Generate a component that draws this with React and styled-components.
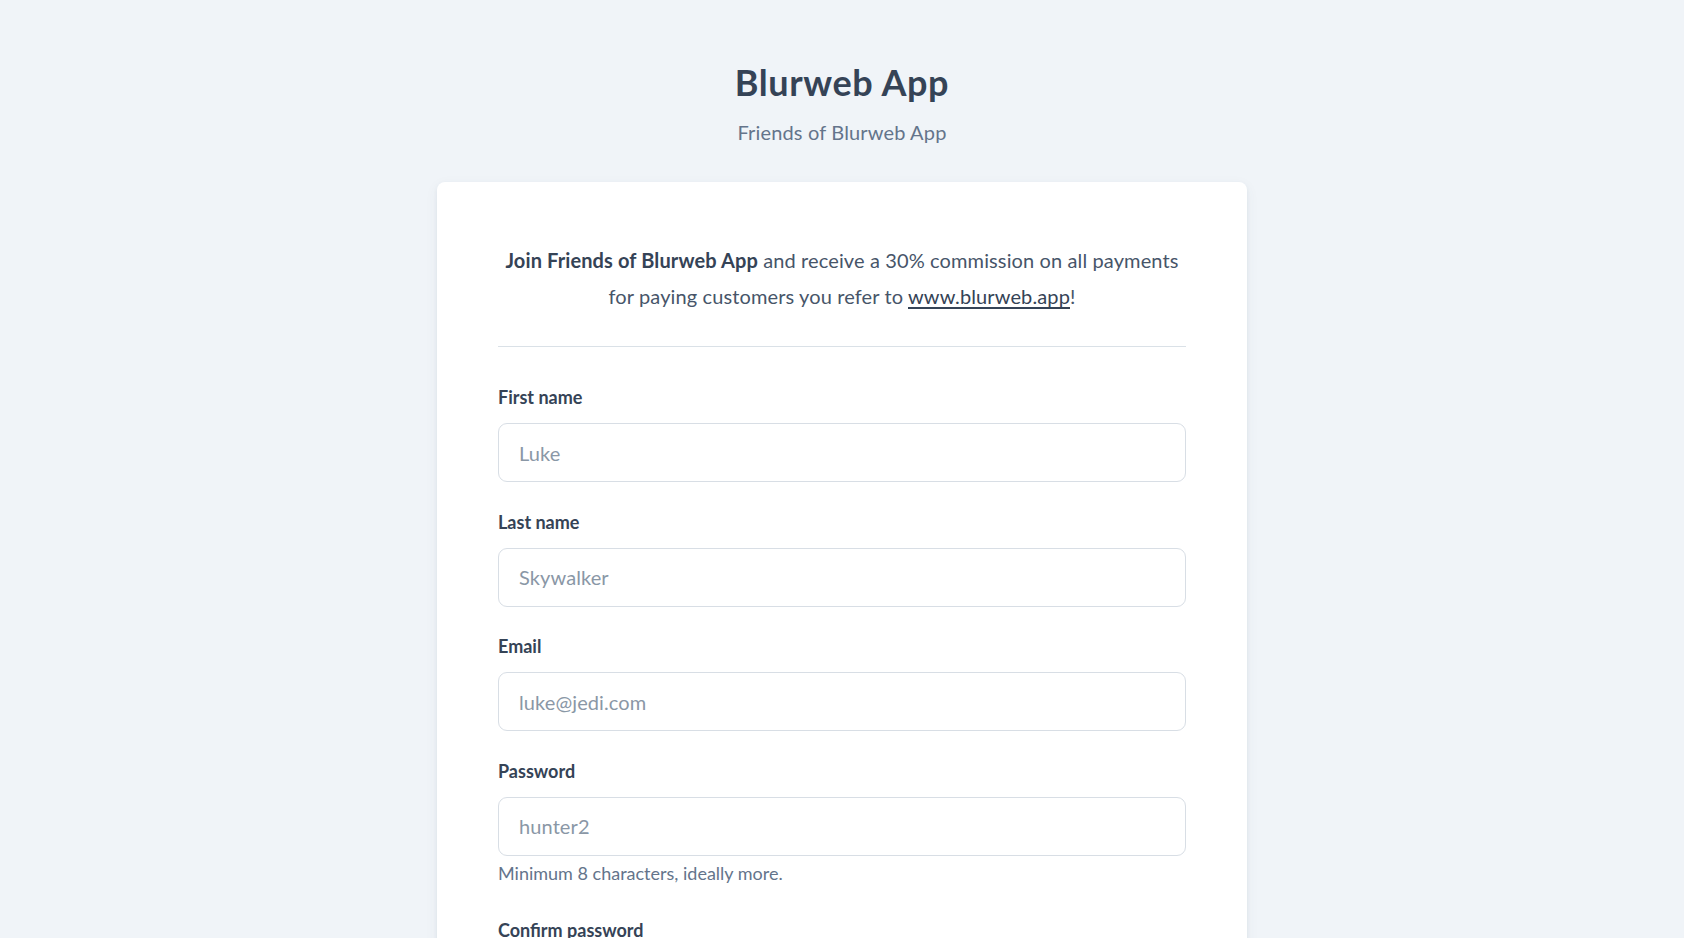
import React from "react";
import styled, { createGlobalStyle } from "styled-components";

const Global = createGlobalStyle`
  html, body { margin: 0; padding: 0; }
  body {
    background: #f0f4f8;
    font-family: Lato, "Open Sans", sans-serif;
    color: #354356;
    -webkit-font-smoothing: antialiased;
  }
  * { box-sizing: border-box; }
`;

const Page = styled.main`
  display: flex;
  flex-direction: column;
  align-items: center;
  padding: 61px 0 60px;
`;

const Title = styled.h1`
  margin: 0;
  font-size: 36px;
  line-height: 43px;
  font-weight: 700;
  letter-spacing: 0.6px;
  color: #354356;
`;

const Subtitle = styled.p`
  margin: 13px 0 35px;
  font-size: 20px;
  line-height: 30px;
  letter-spacing: 0.15px;
  color: #64748b;
`;

const Card = styled.section`
  width: 810px;
  background: #fff;
  border-radius: 8px;
  box-shadow: 0 2px 4px 0 rgba(60, 80, 110, 0.07), 0 4px 14px 0 rgba(60, 80, 110, 0.06);
  padding: 60px 61px;
`;

const Intro = styled.p`
  margin: 0 0 32px;
  text-align: center;
  font-size: 20px;
  line-height: 36px;
  letter-spacing: 0.12px;
  color: #475569;
  strong { color: #354356; font-weight: 700; }
  a { color: #354356; text-decoration: underline; text-underline-offset: 3px; }
`;

const Divider = styled.hr`
  margin: 0 0 37px;
  border: 0;
  border-top: 1px solid #dae1e7;
`;

const Form = styled.form`
  display: flex;
  flex-direction: column;
  gap: 26.6px;
`;

const Field = styled.div`
  display: flex;
  flex-direction: column;
`;

const Label = styled.label`
  font-size: 18px;
  line-height: 27px;
  font-weight: 700;
  color: #354356;
  margin-bottom: 12px;
`;

const Input = styled.input`
  height: 59px;
  width: 100%;
  border: 1px solid #d8dee5;
  border-radius: 9px;
  padding: 0 20px;
  font-family: inherit;
  font-size: 20px;
  letter-spacing: 0.1px;
  color: #354356;
  background: #fff;
  outline: none;
  &::placeholder { color: #8a97a6; }
`;

const Help = styled.p`
  margin: 4px 0 4px;
  font-size: 18px;
  line-height: 27px;
  color: #64748b;
`;

const Button = styled.button`
  height: 56px;
  border: 0;
  border-radius: 8px;
  background: #354356;
  color: #fff;
  font-family: inherit;
  font-size: 18px;
  font-weight: 700;
`;

const fields = [
  { id: "first", label: "First name", placeholder: "Luke" },
  { id: "last", label: "Last name", placeholder: "Skywalker" },
  { id: "email", label: "Email", placeholder: "luke@jedi.com" },
  { id: "password", label: "Password", placeholder: "hunter2", help: "Minimum 8 characters, ideally more." },
  { id: "confirm", label: "Confirm password", placeholder: "hunter2" },
];

export default function App() {
  return (
    <>
      <Global />
      <Page>
        <Title>Blurweb App</Title>
        <Subtitle>Friends of Blurweb App</Subtitle>
        <Card>
          <Intro>
            <strong>Join Friends of Blurweb App</strong> and receive a 30% commission on all payments for paying customers you refer to{" "}
            <a href="#">www.blurweb.app</a>!
          </Intro>
          <Divider />
          <Form onSubmit={(e) => e.preventDefault()}>
            {fields.map((f) => (
              <Field key={f.id}>
                <Label htmlFor={f.id}>{f.label}</Label>
                <Input id={f.id} type="text" placeholder={f.placeholder} />
                {f.help && <Help>{f.help}</Help>}
              </Field>
            ))}
            <Button type="submit">Join</Button>
          </Form>
        </Card>
      </Page>
    </>
  );
}
